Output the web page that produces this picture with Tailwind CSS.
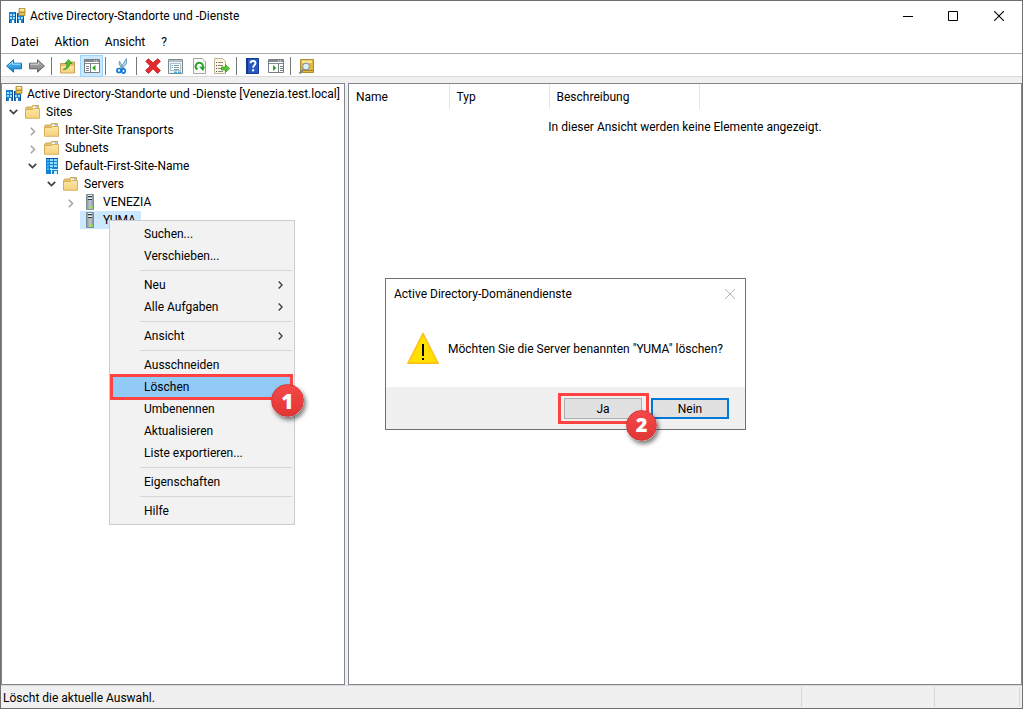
<!DOCTYPE html>
<html lang="de">
<head>
<meta charset="utf-8">
<title>Active Directory-Standorte und -Dienste</title>
<script src="https://cdn.jsdelivr.net/npm/@tailwindcss/browser@4"></script>
</head>
<body class="relative flex h-screen flex-col overflow-hidden border border-[#707070] bg-[#f0f0f0] font-[Roboto,'Noto_Sans',sans-serif] text-xs leading-[18px] text-black">

<svg class="absolute size-0" aria-hidden="true">
  <defs>
    <linearGradient id="gf" x1="0" y1="0" x2="0" y2="1"><stop offset="0" stop-color="#fbe7a6"/><stop offset="1" stop-color="#f5d27a"/></linearGradient>
    <linearGradient id="gb" x1="0" y1="0" x2="0" y2="1"><stop offset="0" stop-color="#5cc4f5"/><stop offset="1" stop-color="#0f82d2"/></linearGradient>
    <linearGradient id="gg" x1="0" y1="0" x2="0" y2="1"><stop offset="0" stop-color="#b5b5b5"/><stop offset="1" stop-color="#7d7d7d"/></linearGradient>
    <linearGradient id="gs" x1="0" y1="0" x2="1" y2="0"><stop offset="0" stop-color="#84909a"/><stop offset=".5" stop-color="#c0c9cf"/><stop offset="1" stop-color="#84909a"/></linearGradient>
    <symbol id="app" viewBox="0 0 17 16">
      <path fill="#1c7fd0" d="M0 4h7v11H0zM8 5h7v10H8z"/>
      <path fill="#9be0ff" d="M1 6h2v2H1zM4 6h2v2H4zM1 9h2v2H1zM4 9h2v2H4zM9 9h2v2H9zM12 9h2v2h-2z"/>
      <path fill="#fff" d="M3 12h2v3H3zM10 12h2v3h-2z"/>
      <path fill="#0b4f96" d="M0 12h1v3H0zM6 4h1v11H6zM8 5h1v10H8zM14 9h1v6h-1z"/>
      <path fill="#e5c257" stroke="#a8862b" stroke-width=".8" d="M10 .5h6v7h-6z"/>
      <path fill="#fff4bd" d="M11 1h4v1.500h-4z"/><path fill="#b08b2d" d="M10 4h6v1h-6z"/>
    </symbol>
    <symbol id="folder" viewBox="0 0 15 14">
      <path fill="#e9c36a" stroke="#c79c45" stroke-width=".8" d="M.6 3.500 1.500 2h5l1-1.500h6v11H.6z"/>
      <path fill="#fff" d="M8 1.500h5v2H8z"/><path fill="#58a7e0" d="M10.500 1.500H13v1h-2.500z"/>
      <path fill="url(#gf)" stroke="#d0a54c" stroke-width=".8" d="M.5 4.500h7l1-1h6v9.800H.5z"/>
    </symbol>
    <symbol id="server" viewBox="0 0 8 16">
      <path fill="url(#gs)" stroke="#6f7d86" stroke-width=".8" d="M.5.5h7v15h-7z"/>
      <path fill="#e7eef2" d="M2 1h4v1H2zM2 4h4v1H2z"/><path fill="#2f3a42" d="M2 2h4v1H2zM2 5h4v1H2z"/>
      <circle cx="5.500" cy="13.500" r="1.300" fill="#8ef21c"/>
    </symbol>
    <symbol id="site" viewBox="0 0 13 16">
      <path fill="#1583cf" d="M0 0h12v16H0z"/>
      <path fill="#8fe0ff" d="M4 1h3v2H4zM8 1h3v2H8zM4 4h3v2H4zM8 4h3v2H8zM4 7h3v2H4zM8 7h3v2H8zM4 10h2v2H4z"/>
      <path fill="#3db1ef" d="M1 1h2v2H1zM1 4h2v2H1zM1 7h2v2H1zM1 10h2v2H1z"/>
      <path fill="#cdeeff" d="M5 11h7v1H5zM5 12h1v4H5zM8 13h3v3H8z"/>
      <path fill="#0b539b" d="M0 0h12v1H0z"/>
    </symbol>
    <symbol id="open" viewBox="0 0 9 6"><path fill="none" stroke="#404040" stroke-width="1.700" d="m.8.8 3.700 3.700L8.200.8"/></symbol>
    <symbol id="closed" viewBox="0 0 6 9"><path fill="none" stroke="#a6a6a6" stroke-width="1.600" d="m.8.8 3.700 3.700L.8 8.200"/></symbol>
    <symbol id="sub" viewBox="0 0 5 8"><path fill="none" stroke="#333" stroke-width="1.200" d="m.7.500 3.400 3.500-3.400 3.500"/></symbol>
  </defs>
</svg>

<header class="flex h-[30px] shrink-0 items-center bg-white pl-2">
  <svg class="h-4 w-[17px] shrink-0"><use href="#app"/></svg>
  <h1 class="ml-1 flex-1">Active Directory-Standorte und -Dienste</h1>
  <button aria-label="Minimieren" class="grid h-7 w-[45px] place-items-center"><svg class="size-[10px]" viewBox="0 0 10 10"><path fill="#000" d="M0 5h10v1H0z"/></svg></button>
  <button aria-label="Maximieren" class="grid h-7 w-[45px] place-items-center"><svg class="size-[10px]" viewBox="0 0 10 10"><path fill="none" stroke="#000" d="M.5.5h9v9h-9z"/></svg></button>
  <button aria-label="Schließen" class="grid h-7 w-[47px] place-items-center"><svg class="size-[10px]" viewBox="0 0 10 10"><path stroke="#000" stroke-width="1.100" d="m0 0 10 10M10 0 0 10"/></svg></button>
</header>

<nav class="flex h-[22px] shrink-0 items-center gap-4 bg-white pl-[10px]">
  <button>Datei</button><button>Aktion</button><button>Ansicht</button><button>?</button>
</nav>

<div role="toolbar" aria-label="Werkzeuge" class="flex h-6 shrink-0 items-center border-y border-t-[#a9acb3] border-b-[#d9d9d9] bg-white pt-[2px] pl-1">
  <button aria-label="Zurück" class="grid h-5 w-[18px] place-items-center"><svg class="h-[14px] w-4" viewBox="0 0 16 14"><path fill="url(#gb)" stroke="#1673b5" stroke-linejoin="round" d="M7.500.8v3.400h8v5.600h-8v3.400L.6 7z"/><path stroke="#a4e2ff" d="M3 6.500 6.500 3v2.200h8" fill="none"/></svg></button>
  <button aria-label="Vorwärts" class="ml-[5px] grid h-5 w-[18px] place-items-center"><svg class="h-[14px] w-4" viewBox="0 0 16 14"><path fill="url(#gg)" stroke="#636363" stroke-linejoin="round" d="M8.500.8v3.400h-8v5.600h8v3.400L15.400 7z"/><path stroke="#d5d5d5" d="M1.500 5.200h8V3" fill="none"/></svg></button>
  <span class="ml-[5px] h-[18px] w-px bg-[#777]"></span>
  <button aria-label="Übergeordnet" class="ml-1 grid h-5 w-[22px] place-items-center"><svg class="size-[15px]" viewBox="0 0 15 15"><path fill="#e4c06b" stroke="#b78e3b" stroke-width=".8" d="M.5 4.500H7L8.500 3h6v11H.5z"/><path fill="url(#gf)" d="M1 7h13v6.500H1z"/><path fill="#4fc32b" stroke="#2d8b1c" stroke-width=".7" d="M3 10.500C6 10 7 7.500 7 4.500H5L8.500.6 12 4.500H9.700C9.500 8 7 11 3 10.500z"/></svg></button>
  <button aria-label="Konsolenstruktur anzeigen" class="ml-[2px] grid h-[22px] w-[23px] place-items-center border border-[#99d1ff] bg-[#cce8ff]"><svg class="h-[14px] w-4" viewBox="0 0 16 14"><path fill="#fff" stroke="#777e83" d="M.5.5h15v13H.5z"/><path fill="#858c91" d="M1 1h14v2H1zM1 4h14v1H1z"/><path fill="#fff" d="M10 1.500h1v1h-1zM12 1.500h1v1h-1z"/><path stroke="#777e83" d="M6.500 5v8.500M2 7.500h3M2 9.500h3M2 11.500h3"/><path fill="#2caa1c" d="m8 9 3.500-3v6z"/></svg></button>
  <span class="ml-[2px] h-[18px] w-px bg-[#777]"></span>
  <button aria-label="Ausschneiden" class="ml-[5px] grid h-5 w-[22px] place-items-center"><svg class="h-4 w-3" viewBox="0 0 12 16"><path fill="#b8d2e2" stroke="#5a90b4" stroke-width=".8" d="M10.500.5v5L6 11 4.800 9.500zM3.500 3l4.200 8-1 .7L3 6z"/><g fill="none" stroke="#1378d4" stroke-width="1.700"><ellipse cx="3" cy="12.500" rx="2.100" ry="2"/><ellipse cx="7.500" cy="13" rx="1.700" ry="2.200"/></g></svg></button>
  <span class="ml-[3px] h-[18px] w-px bg-[#777]"></span>
  <button aria-label="Löschen" class="ml-[5px] grid h-5 w-[22px] place-items-center"><svg class="size-4" viewBox="0 0 16 16"><path fill="#e52c2c" stroke="#b71919" stroke-width=".8" d="m3.300.8 4.700 4 4.700-4 2.700 2.500-4.600 4.600 4.600 4.700-2.900 2.800L8 10.800l-4.500 4.600-2.900-2.800 4.600-4.700L.8 3.300z"/></svg></button>
  <button aria-label="Eigenschaften" class="grid h-5 w-[22px] place-items-center"><svg class="size-[15px]" viewBox="0 0 15 15"><path fill="#eef3f7" stroke="#7d8990" d="M.5.5h14v14H.5z"/><path fill="#b4c1ca" d="M1 1h13v2H1z"/><path fill="#fff" stroke="#98a5ad" stroke-width=".7" d="M2.500 4.500h10v7h-10z"/><path stroke="#8497a5" d="M6 6.500h5M6 8.500h5M6 10.500h5"/><path fill="#36b9ea" d="M3.500 6h1.500v1H3.500zM3.500 8h1.500v1H3.500zM6 12.500h3v1.500H6zM10 12.500h3v1.500h-3z"/></svg></button>
  <button aria-label="Aktualisieren" class="ml-[2px] grid h-5 w-[22px] place-items-center"><svg class="h-4 w-[13px]" viewBox="0 0 13 16"><path fill="#fafafa" stroke="#9a9a9a" stroke-width=".9" d="M.5.5h9l3 3v12H.5z"/><path fill="#ddd" d="M9.500.5v3h3z"/><path fill="none" stroke="#28a32a" stroke-width="2" d="M4.500 11.500A3.600 3.600 0 1 1 9.800 9"/><path fill="#28a32a" d="M6 8.800h6l-2 4.200z"/></svg></button>
  <button aria-label="Liste exportieren" class="ml-px grid h-5 w-[22px] place-items-center"><svg class="size-4" viewBox="0 0 16 16"><path fill="#fff8df" stroke="#b5ae95" stroke-width=".9" d="M.5.5h8l3 3v12H.5z"/><path fill="#555" d="M2 4h1v1H2zM2 7h1v1H2zM2 10h1v1H2zM2 13h1v1H2z"/><path stroke="#888" d="M4 4.500h5M4 7.500h5M4 10.500h4M4 13.500h5"/><path fill="#59c735" stroke="#2d951b" stroke-width=".7" d="M7.500 9h4V6.500l4 4-4 4V12h-4z"/></svg></button>
  <span class="ml-[3px] h-[18px] w-px bg-[#777]"></span>
  <button aria-label="Hilfe" class="ml-1 grid h-5 w-[22px] place-items-center"><svg class="h-4 w-[13px]" viewBox="0 0 13 16"><path fill="#2857c4" stroke="#173a91" d="M.5.5h12v15H.5z"/><path fill="#163985" d="M0 0h2v16H0z"/><path fill="none" stroke="#fff" stroke-width="1.900" d="M4.500 5.200c0-3 5-3 5 0 0 2-2.400 2-2.400 4.600"/><path fill="#fff" d="M6 11.300h2.200v2H6z"/></svg></button>
  <button aria-label="Aktionsbereich anzeigen" class="ml-[2px] grid h-5 w-[22px] place-items-center"><svg class="h-[14px] w-4" viewBox="0 0 16 14"><path fill="#fff" stroke="#777e83" d="M.5.5h15v13H.5z"/><path fill="#858c91" d="M1 1h14v2H1zM1 4h14v1H1z"/><path fill="#fff" d="M10 1.500h1v1h-1zM12 1.500h1v1h-1z"/><path stroke="#777e83" d="M10.500 5v8.500M12 7.500h3M12 9.500h3M12 11.500h3"/><path fill="#2caa1c" d="m8.500 9-3.500-3v6z"/></svg></button>
  <span class="ml-[3px] h-[18px] w-px bg-[#777]"></span>
  <button aria-label="Suchen" class="ml-1 grid h-5 w-[22px] place-items-center"><svg class="size-[15px]" viewBox="0 0 15 15"><path fill="#e0b842" stroke="#a98122" stroke-width=".9" d="M1.500.5h13v13h-13z"/><path fill="#f8e39b" d="M3 1.500h10V4H3z"/><path fill="#a98122" d="M2 11h12v1H2z"/><path stroke="#81878b" stroke-width="2" d="m4.500 10.500-4 4"/><circle cx="7" cy="7.500" r="3.400" fill="#d9f0fa" stroke="#7b9099"/></svg></button>
</div>

<main class="mt-[6px] flex min-h-0 flex-1 gap-[3px]">
  <section aria-label="Konsolenstruktur" class="w-[344px] shrink-0 border border-[#828790] bg-white pt-px">
    <ul>
      <li class="flex h-[18px] items-center pl-1"><svg class="h-4 w-[17px] shrink-0"><use href="#app"/></svg><span class="ml-1 whitespace-nowrap">Active Directory-Standorte und -Dienste [Venezia.test.local]</span></li>
      <li class="flex h-[18px] items-center pl-[7px]"><svg class="h-[6px] w-[9px]"><use href="#open"/></svg><svg class="ml-[7px] h-[14px] w-[15px]"><use href="#folder"/></svg><span class="ml-[6px]">Sites</span></li>
      <li class="flex h-[18px] items-center pl-7"><svg class="mt-[3px] h-[9px] w-[6px]"><use href="#closed"/></svg><svg class="ml-2 h-[14px] w-[15px]"><use href="#folder"/></svg><span class="ml-[6px]">Inter-Site Transports</span></li>
      <li class="flex h-[18px] items-center pl-7"><svg class="mt-[3px] h-[9px] w-[6px]"><use href="#closed"/></svg><svg class="ml-2 h-[14px] w-[15px]"><use href="#folder"/></svg><span class="ml-[6px]">Subnets</span></li>
      <li class="flex h-[18px] items-center pl-[26px]"><svg class="h-[6px] w-[9px]"><use href="#open"/></svg><svg class="ml-[9px] h-4 w-[13px]"><use href="#site"/></svg><span class="ml-[6px]">Default-First-Site-Name</span></li>
      <li class="flex h-[18px] items-center pl-[45px]"><svg class="h-[6px] w-[9px]"><use href="#open"/></svg><svg class="ml-[7px] h-[14px] w-[15px]"><use href="#folder"/></svg><span class="ml-[6px]">Servers</span></li>
      <li class="flex h-[18px] items-center pl-[66px]"><svg class="mt-[3px] h-[9px] w-[6px]"><use href="#closed"/></svg><svg class="ml-3 h-4 w-2"><use href="#server"/></svg><span class="ml-[9px]">VENEZIA</span></li>
      <li class="flex h-[18px] items-center pl-[78px]"><span class="flex h-[18px] items-center bg-[#cce8ff] pr-[5px] pl-[6px]"><svg class="h-4 w-2"><use href="#server"/></svg><span class="ml-[9px]">YUMA</span></span></li>
    </ul>
  </section>

  <section aria-label="Details" class="min-w-0 flex-1 border border-[#828790] bg-white">
    <table class="w-full table-fixed">
      <thead><tr class="h-[25px] text-left">
        <th class="w-[100px] border-r border-[#e5e5e5] pl-[7px] font-normal">Name</th>
        <th class="w-[100px] border-r border-[#e5e5e5] pl-[7px] font-normal">Typ</th>
        <th class="w-[150px] border-r border-[#e5e5e5] pl-[7px] font-normal">Beschreibung</th>
        <th></th>
      </tr></thead>
      <tbody><tr><td colspan="4" class="pt-[9px] text-center">In dieser Ansicht werden keine Elemente angezeigt.</td></tr></tbody>
    </table>
  </section>
</main>

<footer class="flex h-[23px] shrink-0 border-t border-[#d7d7d7] py-px">
  <p class="flex-1 pt-[2px] pl-[2px]">Löscht die aktuelle Auswahl.</p>
  <span class="w-[133px] border-l border-[#d7d7d7]"></span>
  <span class="w-[86px] border-x border-[#d7d7d7]"></span>
  <span class="w-[2px]"></span>
</footer>

<!-- Kontextmenü -->
<div role="menu" class="absolute top-[219px] left-[108px] flex w-[186px] flex-col border border-[#ccc] bg-[#f2f2f2] py-[2px]">
  <button role="menuitem" class="h-[22px] pl-[34px] text-left">Suchen...</button>
  <button role="menuitem" class="h-[22px] pl-[34px] text-left">Verschieben...</button>
  <hr class="my-[3px] mr-[2px] ml-[30px] border-[#d7d7d7]">
  <button role="menuitem" class="flex h-[22px] items-center justify-between pr-[11px] pl-[34px]">Neu<svg class="h-2 w-[5px]"><use href="#sub"/></svg></button>
  <button role="menuitem" class="flex h-[22px] items-center justify-between pr-[11px] pl-[34px]">Alle Aufgaben<svg class="h-2 w-[5px]"><use href="#sub"/></svg></button>
  <hr class="my-[3px] mr-[2px] ml-[30px] border-[#d7d7d7]">
  <button role="menuitem" class="flex h-[22px] items-center justify-between pr-[11px] pl-[34px]">Ansicht<svg class="h-2 w-[5px]"><use href="#sub"/></svg></button>
  <hr class="my-[3px] mr-[2px] ml-[30px] border-[#d7d7d7]">
  <button role="menuitem" class="h-[22px] pl-[34px] text-left">Ausschneiden</button>
  <div class="relative h-[22px]">
    <button role="menuitem" class="h-[22px] w-[183px] bg-[#91c9f7] pl-[34px] text-left">Löschen</button>
    <span class="pointer-events-none absolute -inset-y-[2px] right-px left-0 border-3 border-[#ff4343]"></span>
    <span class="absolute top-[8px] -right-[10px] z-10 grid size-[33px] place-items-center rounded-full border border-[#d03838] bg-linear-to-b from-[#f64848] to-[#e03636] font-['Open_Sans',sans-serif] text-[21px] font-extrabold text-white shadow-[2px_3px_4px_rgba(0,0,0,0.5)]">1</span>
  </div>
  <button role="menuitem" class="h-[22px] pl-[34px] text-left">Umbenennen</button>
  <button role="menuitem" class="h-[22px] pl-[34px] text-left">Aktualisieren</button>
  <button role="menuitem" class="h-[22px] pl-[34px] text-left">Liste exportieren...</button>
  <hr class="my-[3px] mr-[2px] ml-[30px] border-[#d7d7d7]">
  <button role="menuitem" class="h-[22px] pl-[34px] text-left">Eigenschaften</button>
  <hr class="my-[3px] mr-[2px] ml-[30px] border-[#d7d7d7]">
  <button role="menuitem" class="h-[22px] pl-[34px] text-left">Hilfe</button>
</div>

<!-- Bestätigungsdialog -->
<div role="dialog" aria-labelledby="dlg" class="absolute top-[277px] left-[384px] flex h-[152px] w-[361px] flex-col border border-[#707070] bg-white">
  <div class="flex h-[30px] items-center justify-between pr-[10px] pl-2">
    <h2 id="dlg">Active Directory-Domänendienste</h2>
    <button aria-label="Dialog schließen"><svg class="size-[10px]" viewBox="0 0 10 10"><path stroke="#b5b5b5" d="m0 0 10 10M10 0 0 10"/></svg></button>
  </div>
  <div class="flex flex-1 items-center gap-[9px] pl-[21px]">
    <svg class="size-8 shrink-0" viewBox="0 0 32 32"><path fill="#ffe000" stroke="#ffbe19" stroke-width="1.500" d="M16 1.500 31 31.200H1z"/><path fill="#000" d="M15 12h2v12h-2zM15 26h2v2h-2z"/></svg>
    <p class="pt-[2px]">Möchten Sie die Server benannten "YUMA" löschen?</p>
  </div>
  <div class="flex h-[42px] items-center justify-end gap-[9px] bg-[#f0f0f0] pr-4">
    <div class="relative">
      <button class="block h-[21px] w-[78px] border border-[#adadad] bg-[#e1e1e1] pt-px">Ja</button>
      <span class="pointer-events-none absolute -top-[5px] -right-[7px] -bottom-[5px] -left-[6px] border-3 border-[#ff4343]"></span>
      <span class="absolute top-[12px] -right-[15px] z-10 grid size-[31px] place-items-center rounded-full border border-[#d03838] bg-linear-to-b from-[#f64848] to-[#e03636] font-['Open_Sans',sans-serif] text-xl font-extrabold text-white shadow-[2px_3px_4px_rgba(0,0,0,0.5)]">2</span>
    </div>
    <button class="block h-[21px] w-[78px] border-2 border-[#0078d7] bg-[#e1e1e1]">Nein</button>
  </div>
</div>
</body>
</html>
